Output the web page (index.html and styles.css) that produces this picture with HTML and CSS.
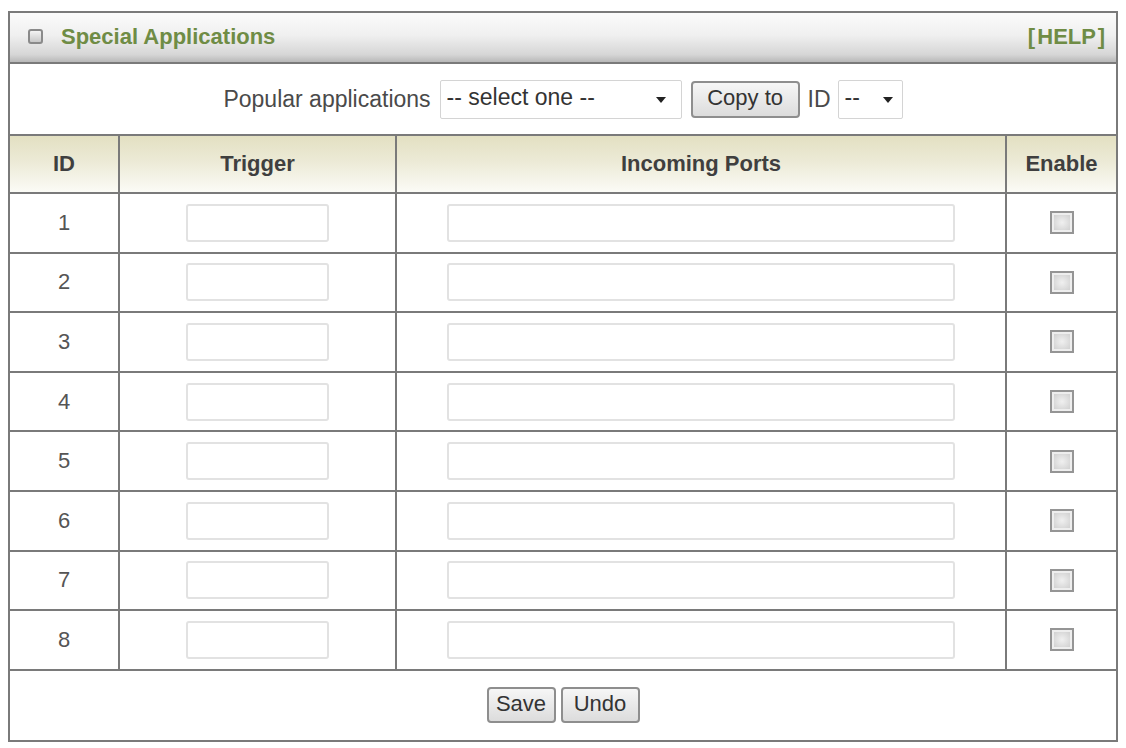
FILE: index.html
```html
<!DOCTYPE html>
<html lang="en">
<head>
    <meta charset="UTF-8">
    <meta name="viewport" content="width=device-width, initial-scale=1.0">
    <title>Special Applications</title>
    <link rel="stylesheet" href="styles.css">
</head>
<body>
    <table class="apps-table">
        <colgroup>
            <col class="col-id">
            <col class="col-trigger">
            <col class="col-ports">
            <col class="col-enable">
        </colgroup>
        <tr class="title-row">
            <td colspan="4">
                <div class="title-bar">
                    <div class="title-left">
                        <span class="title-icon"></span>
                        <span class="title-text">Special Applications</span>
                    </div>
                    <a class="help-link" href="#">[ HELP ]</a>
                </div>
            </td>
        </tr>
        <tr class="popular-row">
            <td colspan="4">
                <div class="popular">
                    <span class="label">Popular applications</span>
                    <span class="select-wrap app-select">
                        <select>
                            <option>-- select one --</option>
                        </select>
                    </span>
                    <button class="btn copy-btn">Copy to</button>
                    <span class="label id-label">ID</span>
                    <span class="select-wrap id-select">
                        <select>
                            <option>--</option>
                        </select>
                    </span>
                </div>
            </td>
        </tr>
        <tr class="head-row">
            <th>ID</th>
            <th>Trigger</th>
            <th>Incoming Ports</th>
            <th>Enable</th>
        </tr>
        <tbody id="rows">
        </tbody>
        <tr class="foot-row">
            <td colspan="4">
                <div class="actions">
                    <button class="btn save-btn">Save</button>
                    <button class="btn undo-btn">Undo</button>
                </div>
            </td>
        </tr>
    </table>

    <script>
        const tbody = document.querySelector('#rows')
        for (let i = 1; i <= 8; i++) {
            tbody.innerHTML += `
                <tr class="entry-row">
                    <td class="num">${i}</td>
                    <td><input type="text" class="trigger-input"></td>
                    <td><input type="text" class="ports-input"></td>
                    <td><input type="checkbox" class="enable-box"></td>
                </tr>
            `
        }
    </script>
</body>
</html>
```

FILE: styles.css
```css
body {
    font-family: 'Liberation Sans', Arial, sans-serif;
    margin: 11px 8px;
    background-color: #ffffff;
    color: #444;
}
.apps-table {
    width: 1108px;
    border-collapse: collapse;
    table-layout: fixed;
    border: 2px solid #7a7a7a;
}
.col-id {
    width: 110px;
}
.col-trigger {
    width: 277px;
}
.col-ports {
    width: 610px;
}
.col-enable {
    width: 111px;
}
td, th {
    border: 2px solid #7a7a7a;
    padding: 0;
    text-align: center;
}
.title-row td {
    height: 49px;
    background: linear-gradient(#fbfbfb 0%, #f0f0f0 45%, #d6d6d6 85%, #b8b8b8 100%);
}
.title-bar {
    display: flex;
    justify-content: space-between;
    align-items: center;
    padding: 0 11px 2px 18px;
}
.title-left {
    display: flex;
    align-items: center;
    gap: 18px;
}
.title-icon {
    width: 11px;
    height: 11px;
    border: 2px solid #8a8a8a;
    border-radius: 3px;
    background: linear-gradient(#f4f4f4, #c8c8c8);
}
.title-text, .help-link {
    font-size: 22px;
    font-weight: bold;
    color: #6f8c45;
    text-decoration: none;
}
.help-link {
    word-spacing: -4px;
}
.popular-row td {
    height: 70px;
}
.popular {
    display: flex;
    justify-content: center;
    align-items: center;
    gap: 9px;
    font-size: 23px;
    color: #4a4a4a;
}
.select-wrap {
    position: relative;
    display: inline-block;
}
.select-wrap select {
    appearance: none;
    font-family: inherit;
    font-size: 23px;
    color: #333;
    background-color: #fff;
    border: 1px solid #d4d4d4;
    border-radius: 2px;
    height: 39px;
    padding: 0 30px 4px 6px;
}
.select-wrap::after {
    content: '';
    position: absolute;
    top: 17px;
    border-left: 5px solid transparent;
    border-right: 5px solid transparent;
    border-top: 6px solid #222;
    pointer-events: none;
}
.app-select select {
    width: 242px;
}
.app-select::after {
    right: 16px;
}
.id-select select {
    width: 65px;
}
.id-select::after {
    right: 10px;
}
.id-label {
    margin-left: -1px;
    margin-right: -2px;
}
.btn {
    font-family: inherit;
    font-size: 22px;
    color: #333;
    height: 37px;
    padding: 0 9px 3px;
    border: 2px solid #8e8e8e;
    border-radius: 4px;
    background: linear-gradient(#f6f6f6, #dcdcdc);
}
.copy-btn {
    width: 109px;
}
.head-row th {
    height: 56px;
    font-size: 22px;
    font-weight: bold;
    color: #3f3f3f;
    background: linear-gradient(#e3e0c2 0%, #ecead6 45%, #fbfbf6 100%);
}
.entry-row td {
    height: 57.6px;
}
.num {
    font-size: 22px;
    color: #555;
}
.trigger-input, .ports-input {
    height: 38px;
    box-sizing: border-box;
    border: 2px solid #e2e2e2;
    border-radius: 3px;
    background-color: #fff;
    display: block;
    margin: 0 auto;
}
.trigger-input {
    width: 143px;
}
.ports-input {
    width: 508px;
}
.enable-box {
    appearance: none;
    width: 24px;
    height: 23px;
    display: block;
    margin: 0 auto;
    border: 2px solid #959595;
    background: radial-gradient(#f0f0f0, #c8c8c8);
    box-shadow: inset 0 0 0 2px #eeeeee;
}
.foot-row td {
    height: 69px;
}
.actions {
    display: flex;
    justify-content: center;
    gap: 5px;
}
.save-btn {
    width: 69px;
    height: 36px;
    padding: 0 0 3px;
}
.undo-btn {
    width: 79px;
    height: 36px;
    padding: 0 0 3px;
}
```
